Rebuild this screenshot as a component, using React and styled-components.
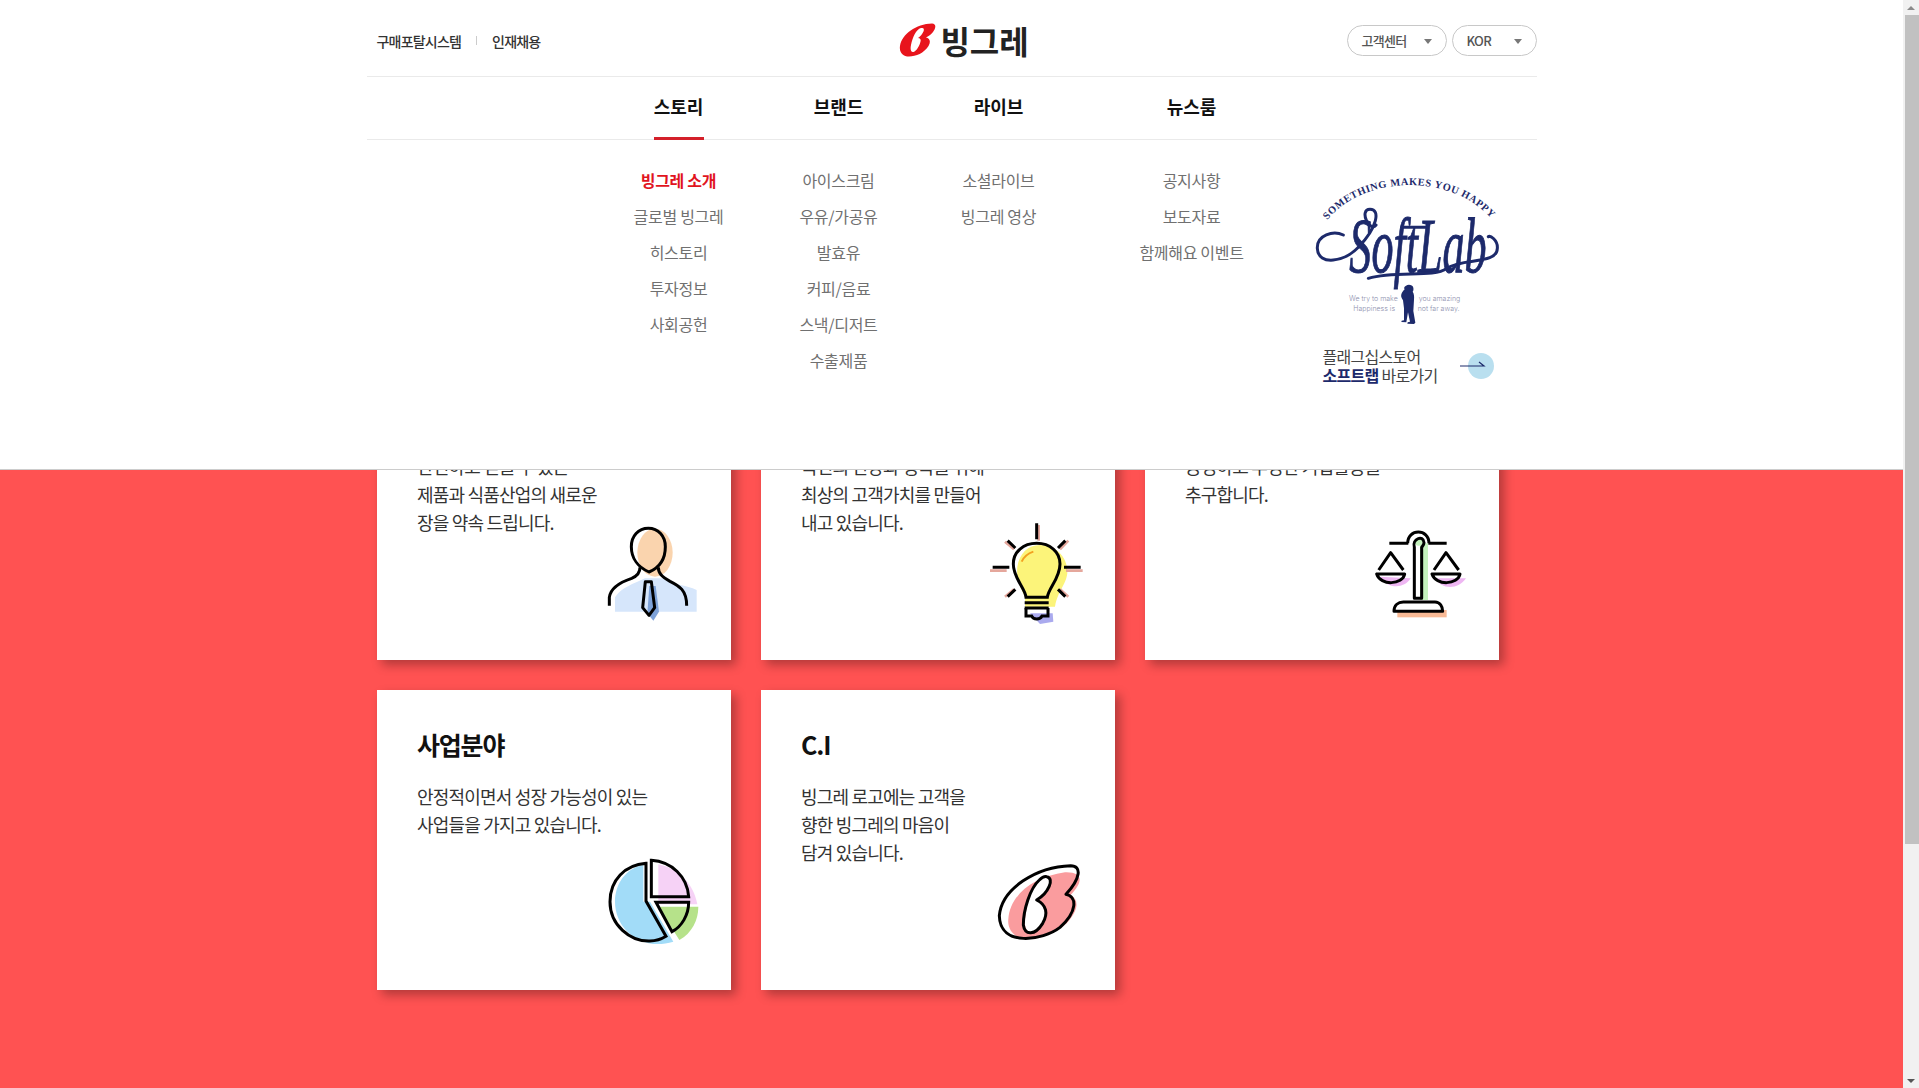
import React from "react";
import styled, { createGlobalStyle } from "styled-components";

const FONT = `"Noto Sans CJK KR", "Noto Sans", "Liberation Sans", sans-serif`;

const GlobalStyle = createGlobalStyle`
  html, body { margin: 0; padding: 0; overflow: hidden; background: #fff; }
  * { box-sizing: border-box; }
  #root { font-family: ${FONT}; }
  ul { list-style: none; margin: 0; padding: 0; }
`;

const storyMenu = ["빙그레 소개", "글로벌 빙그레", "히스토리", "투자정보", "사회공헌"];
const brandMenu = ["아이스크림", "우유/가공유", "발효유", "커피/음료", "스낵/디저트", "수출제품"];
const liveMenu = ["소셜라이브", "빙그레 영상"];
const newsMenu = ["공지사항", "보도자료", "함께해요 이벤트"];

const BMark = () => (
  <svg width="37" height="34" viewBox="0 0 74 68">
    <path
      fill="#e8141c"
      fillRule="evenodd"
      d="M2 46C6 22 34 2 66 1c9 0 8 10 2 17-3 4-8 8-14 11 8 1 10 9 5 17C50 60 34 67 20 67 8 67 0 59 2 46ZM44 10C34 13 27 29 24 44c-2 10 0 15 5 14 6-2 12-12 14-21 1-4 0-6-5-7 7-5 14-15 11-19-1-1-3-1-5-1Z"
    />
  </svg>
);

const SoftLabLogo = () => (
  <svg width="230" height="160" viewBox="0 0 690 480">
    <defs>
      <path id="softArc" d="M112 150C220 16 480 6 604 146" />
    </defs>
    <text fontFamily="'Liberation Serif', serif" fontWeight="700" fontSize="31" fill="#1d2a6b">
      <textPath href="#softArc" textLength="548">SOMETHING MAKES YOU HAPPY</textPath>
    </text>
    <text
      x="178"
      y="306"
      fontFamily="'Liberation Serif', serif"
      fontStyle="italic"
      fontSize="232"
      fill="#1d2a6b"
      stroke="#1d2a6b"
      strokeWidth="3"
      textLength="412"
      lengthAdjust="spacingAndGlyphs"
    >
      SoftLab
    </text>
    <g fill="none" stroke="#1d2a6b" strokeWidth="9" strokeLinecap="round">
      <path d="M258 165C240 190 205 118 240 118C272 118 262 172 205 232C165 275 85 290 82 235C80 195 130 180 160 195" />
      <path d="M235 325C320 300 430 325 470 295C520 262 620 285 622 235C624 210 600 195 595 200" />
      <path d="M335 172H405" />
    </g>
    <text fontFamily="'Inter', 'Liberation Sans', sans-serif" fontWeight="300" fontSize="21" fill="#8d90ae">
      <tspan x="177" y="394">We try to make</tspan>
      <tspan x="190" y="423">Happiness is</tspan>
      <tspan x="386" y="394">you amazing</tspan>
      <tspan x="383" y="423">not far away.</tspan>
    </text>
    <path
      fill="#1d2a6b"
      d="M348 347c8-5 20-2 22 6 1 5 0 10-2 12 4 5 5 14 4 24l-2 34 6 35-4 4-20-1 1-4 7-2-6-28-5 30-15-1 1-4 7-1 0-36-3-24c-4-6-7-11-5-18 2-6 6-12 10-15-3-4-1-9 4-11Z"
    />
  </svg>
);

const PromoArrow = () => (
  <svg width="36" height="30" viewBox="0 0 36 30">
    <circle cx="21" cy="15" r="13" fill="#b9dfef" />
    <path d="M0 15H24L19 11" fill="none" stroke="#1d2a6b" strokeWidth="1.2" />
  </svg>
);

const PersonIcon = () => (
  <svg viewBox="0 0 360 360">
    <ellipse cx="195" cy="128" rx="53" ry="72" fill="#fad4ae" />
    <path d="M75 305V262C95 232 130 222 165 205H225C245 225 290 225 320 240V305Z" fill="#d6e6fb" />
    <path d="M178 228H197L207 305L190 332L172 310Z" fill="#7ea2d8" />
    <g fill="none" stroke="#000" strokeWidth="9" strokeLinejoin="round">
      <path d="M175 55C145 55 124 78 124 110C124 145 145 172 177 186C210 172 226 145 226 110C226 78 205 55 175 55Z" />
      <path d="M58 287V262C62 232 95 215 125 205C143 198 150 185 150 172" />
      <path d="M205 172C205 190 215 200 240 214C268 228 290 240 290 287" />
      <path d="M166 215H184L194 293L177 316L158 293Z" />
    </g>
  </svg>
);

const BulbIcon = () => (
  <svg viewBox="0 0 360 360">
    <path d="M180 105C235 105 265 150 262 190C258 225 235 240 225 290H135V260C120 230 108 205 112 170C118 130 145 105 180 105Z" fill="#fcf47a" />
    <path d="M150 310H218L220 335L180 342Z" fill="#aaaaee" />
    <g stroke="#e5a79c" strokeWidth="8" fill="none">
      <path d="M176 45V92M75 95L102 118M265 92L240 118M30 182H80M258 182H308M75 260L102 238M265 260L240 238" />
    </g>
    <path d="M125 155C132 140 145 130 160 125" fill="none" stroke="#f2a120" strokeWidth="6" />
    <g stroke="#000" strokeWidth="9" fill="none">
      <path d="M170 40V88M83 92L106 114M256 92L234 114M38 172H88M252 172H302M83 260L106 238M256 260L234 238" />
      <path d="M138 262C136 235 100 205 100 162C100 125 130 100 170 100C210 100 240 125 240 162C240 205 205 235 202 262Z" />
      <path d="M134 278H206M134 294H206" />
      <path d="M138 294V318H155C160 330 180 330 186 318H204V294" />
    </g>
  </svg>
);

const ScaleIcon = () => (
  <svg viewBox="0 0 360 360">
    <path d="M60 200C80 235 130 240 152 205Z" fill="#eeb6f2" />
    <path d="M225 205C245 240 295 240 318 205Z" fill="#eeb6f2" />
    <rect x="180" y="100" width="24" height="170" fill="#c4f2bd" />
    <circle cx="176" cy="95" r="12" fill="#c4f2bd" />
    <rect x="112" y="300" width="148" height="22" fill="#f8b995" />
    <g stroke="#000" strokeWidth="9" fill="none" strokeLinejoin="round">
      <path d="M88 100H145M205 100H260" />
      <path d="M143 100C143 55 207 55 207 100" />
      <path d="M163 112C155 88 190 72 192 98C192 104 188 108 185 112V265H163Z" />
      <path d="M56 180L92 128L130 180" />
      <path d="M222 180L258 128L296 180" />
      <path d="M50 192H134C128 225 62 228 50 192Z" />
      <path d="M216 192H300C294 225 228 228 216 192Z" />
      <path d="M102 304C102 285 115 276 130 276H225C240 276 248 290 248 304Z" />
    </g>
  </svg>
);

const PieIcon = () => (
  <svg viewBox="0 0 360 360">
    <path d="M160 60C105 70 75 120 75 170C75 250 150 320 250 290L180 170H160Z" fill="#a2dcf8" />
    <path d="M205 58C265 70 310 115 322 178H205Z" fill="#f6d2f6" />
    <path d="M205 185H325C325 225 305 265 268 285Z" fill="#b6e28a" />
    <g stroke="#000" strokeWidth="9" fill="none" strokeLinejoin="miter">
      <path d="M168 55C105 60 60 105 60 170C60 240 120 290 180 288C200 288 215 282 228 274L168 168Z" />
      <path d="M184 46C245 50 292 95 296 155H184Z" />
      <path d="M198 172H296C296 210 275 245 246 260Z" />
    </g>
  </svg>
);

const BrandIcon = () => (
  <svg viewBox="0 0 360 360">
    <path d="M85 222C90 150 160 95 255 82C308 80 312 110 272 150C298 165 296 195 260 235C225 270 150 285 115 277C95 267 82 247 85 222Z" fill="#fa9c9e" />
    <path d="M178 105C150 130 135 195 135 240C140 270 165 270 188 235C205 205 200 180 170 165C205 145 225 100 200 95C192 93 185 98 178 105Z" fill="#fff" />
    <g stroke="#000" strokeWidth="9" fill="none" strokeLinejoin="round">
      <path d="M58 212C65 130 170 65 272 62C306 62 302 100 258 148C292 155 292 200 240 247C188 287 60 307 58 212Z" />
      <path d="M178 105C150 130 130 195 130 240C135 272 165 272 188 235C205 205 200 180 170 165C205 145 225 100 200 95C192 93 185 98 178 105Z" />
    </g>
  </svg>
);

const cards = [
  {
    title: "경영이념",
    lines: ["안전하고 믿을 수 있는", "제품과 식품산업의 새로운", "장을 약속 드립니다."],
    icon: <PersonIcon />,
    right: 21,
    bottom: 30,
  },
  {
    title: "고객가치",
    lines: ["국민의 건강과 행복을 위해", "최상의 고객가치를 만들어", "내고 있습니다."],
    icon: <BulbIcon />,
    right: 15,
    bottom: 30,
  },
  {
    title: "윤리경영",
    lines: ["공정하고 투명한 기업활동을", "추구합니다."],
    icon: <ScaleIcon />,
    right: 19,
    bottom: 30,
  },
  {
    title: "사업분야",
    lines: ["안정적이면서 성장 가능성이 있는", "사업들을 가지고 있습니다."],
    icon: <PieIcon />,
    right: 21,
    bottom: 25,
  },
  {
    title: "C.I",
    lines: ["빙그레 로고에는 고객을", "향한 빙그레의 마음이", "담겨 있습니다."],
    icon: <BrandIcon />,
    right: 15,
    bottom: 25,
  },
];

const MenuColumn = ({ items, activeIndex }) => (
  <ul>
    {items.map((item, i) => (
      <MenuItem key={item} $active={i === activeIndex}>
        {item}
      </MenuItem>
    ))}
  </ul>
);

export default function App() {
  return (
    <Screen>
      <GlobalStyle />
      <Page>
        <Header>
          <HeaderInner>
            <TopBar>
              <TopLinks>
                <TopLink>구매포탈시스템</TopLink>
                <TopDivider />
                <TopLink>인재채용</TopLink>
              </TopLinks>
              <Logo>
                <BMark />
                <LogoText>빙그레</LogoText>
              </Logo>
              <TopActions>
                <Pill $width={100}>
                  고객센터
                  <Caret />
                </Pill>
                <Pill $width={85}>
                  KOR
                  <Caret />
                </Pill>
              </TopActions>
            </TopBar>
            <NavBar>
              <NavItem $width={160} $active>
                스토리
              </NavItem>
              <NavItem $width={160}>브랜드</NavItem>
              <NavItem $width={160}>라이브</NavItem>
              <NavItem $width={226}>뉴스룸</NavItem>
            </NavBar>
            <Dropdown>
              <MenuCell $width={160}>
                <MenuColumn items={storyMenu} activeIndex={0} />
              </MenuCell>
              <MenuCell $width={160}>
                <MenuColumn items={brandMenu} />
              </MenuCell>
              <MenuCell $width={160}>
                <MenuColumn items={liveMenu} />
              </MenuCell>
              <MenuCell $width={226}>
                <MenuColumn items={newsMenu} />
              </MenuCell>
              <Promo>
                <SoftLabLogo />
                <PromoLink>
                  <PromoText>
                    플래그십스토어
                    <br />
                    <strong>소프트랩</strong> 바로가기
                  </PromoText>
                  <PromoArrow />
                </PromoLink>
              </Promo>
            </Dropdown>
          </HeaderInner>
        </Header>
        <CardGrid>
          {cards.map((card) => (
            <Card key={card.title}>
              <CardTitle>{card.title}</CardTitle>
              <CardText>
                {card.lines.map((line) => (
                  <span key={line}>{line}</span>
                ))}
              </CardText>
              <CardIcon $right={card.right} $bottom={card.bottom}>
                {card.icon}
              </CardIcon>
            </Card>
          ))}
        </CardGrid>
      </Page>
      <Scrollbar>
        <ScrollArrow $up />
        <ScrollTrack>
          <ScrollThumb />
        </ScrollTrack>
        <ScrollArrow />
      </Scrollbar>
    </Screen>
  );
}

const Screen = styled.div`
  display: flex;
  width: 1919px;
  height: 1088px;
  overflow: hidden;
`;

const Page = styled.main`
  position: relative;
  width: 1903px;
  height: 1088px;
  background: #ff5252;
  overflow: hidden;
  padding: 360px 0 0 377px;
`;

const Header = styled.header`
  position: absolute;
  top: 0;
  left: 0;
  z-index: 10;
  width: 100%;
  height: 470px;
  background: #fff;
  border-bottom: 1px solid #ccc;
`;

const HeaderInner = styled.div`
  width: 1170px;
  margin: 0 auto;
`;

const TopBar = styled.div`
  position: relative;
  display: flex;
  align-items: center;
  justify-content: space-between;
  height: 77px;
  padding: 5px 0 0 10px;
  border-bottom: 1px solid #eaeaea;
`;

const TopLinks = styled.div`
  display: flex;
  align-items: center;
  gap: 15px;
`;

const TopLink = styled.a`
  font-size: 14px;
  font-weight: 500;
  color: #333;
  letter-spacing: -0.8px;
`;

const TopDivider = styled.span`
  width: 1px;
  height: 9px;
  background: #ccc;
`;

const Logo = styled.div`
  position: absolute;
  left: 532px;
  top: 23px;
  display: flex;
  align-items: center;
  gap: 5px;
`;

const LogoText = styled.span`
  font-size: 32px;
  line-height: 34px;
  font-weight: 700;
  color: #222;
  letter-spacing: -0.1px;
`;

const TopActions = styled.div`
  display: flex;
  gap: 5px;
`;

const Pill = styled.button`
  display: flex;
  align-items: center;
  justify-content: space-between;
  width: ${(p) => p.$width}px;
  height: 31px;
  padding: 0 14px;
  background: #fff;
  border: 1px solid #c8c8c8;
  border-radius: 16px;
  font-family: ${FONT};
  font-size: 13px;
  font-weight: 500;
  color: #555;
  letter-spacing: -0.7px;
`;

const Caret = styled.i`
  width: 0;
  height: 0;
  margin-top: 2px;
  border-left: 4.5px solid transparent;
  border-right: 4.5px solid transparent;
  border-top: 5px solid #777;
`;

const NavBar = styled.nav`
  display: flex;
  height: 63px;
  padding-left: 232px;
  border-bottom: 1px solid #eaeaea;
`;

const NavItem = styled.a`
  position: relative;
  width: ${(p) => p.$width}px;
  text-align: center;
  font-size: 18px;
  line-height: 59px;
  font-weight: 700;
  color: #111;
  letter-spacing: -0.1px;

  &::after {
    content: "";
    display: ${(p) => (p.$active ? "block" : "none")};
    position: absolute;
    left: 55px;
    bottom: -1px;
    width: 50px;
    height: 3px;
    background: #d4202a;
  }
`;

const Dropdown = styled.div`
  display: flex;
  padding-left: 232px;
`;

const MenuCell = styled.div`
  width: ${(p) => p.$width}px;
  padding-top: 22px;
`;

const MenuItem = styled.li`
  height: 36px;
  line-height: 36px;
  text-align: center;
  font-size: 16px;
  font-weight: ${(p) => (p.$active ? 700 : 400)};
  color: ${(p) => (p.$active ? "#e1141e" : "#707070")};
  letter-spacing: -0.3px;
`;

const Promo = styled.div`
  width: 230px;
  margin-left: -15px;
  padding-top: 30px;
  flex: none;
`;

const PromoLink = styled.div`
  display: flex;
  align-items: center;
  gap: 22px;
  margin: 12px 0 0 33px;
`;

const PromoText = styled.p`
  margin: 0;
  font-size: 16px;
  line-height: 19px;
  color: #444;
  letter-spacing: -0.7px;

  strong {
    color: #1d2a6b;
    font-weight: 700;
  }
`;

const CardGrid = styled.div`
  display: grid;
  grid-template-columns: repeat(3, 354px);
  grid-auto-rows: 300px;
  gap: 30px;
`;

const Card = styled.article`
  position: relative;
  padding: 36px 40px 0;
  background: #fff;
  box-shadow: 5px 5px 10px rgba(0, 0, 0, 0.3);
`;

const CardTitle = styled.h3`
  margin: 0 0 20px;
  font-size: 25px;
  line-height: 36px;
  font-weight: 700;
  color: #111;
  letter-spacing: -1.2px;
`;

const CardText = styled.p`
  display: flex;
  flex-direction: column;
  margin: 0;
  font-size: 18px;
  line-height: 28px;
  color: #333;
  letter-spacing: -0.8px;
`;

const CardIcon = styled.div`
  position: absolute;
  right: ${(p) => p.$right}px;
  bottom: ${(p) => p.$bottom}px;
  width: 120px;
  height: 120px;
`;

const Scrollbar = styled.div`
  display: flex;
  flex-direction: column;
  width: 16px;
  height: 1088px;
  background: #f1f1f1;
`;

const ScrollArrow = styled.div`
  height: 15px;
  display: flex;
  align-items: center;
  justify-content: center;

  &::before {
    content: "";
    border-left: 4px solid transparent;
    border-right: 4px solid transparent;
    ${(p) => (p.$up ? "border-bottom: 4px solid #8a8a8a;" : "border-top: 4px solid #555;")}
  }
`;

const ScrollTrack = styled.div`
  flex: 1;
  padding-left: 2px;
`;

const ScrollThumb = styled.div`
  width: 14px;
  height: 829px;
  background: #c1c1c1;
`;
